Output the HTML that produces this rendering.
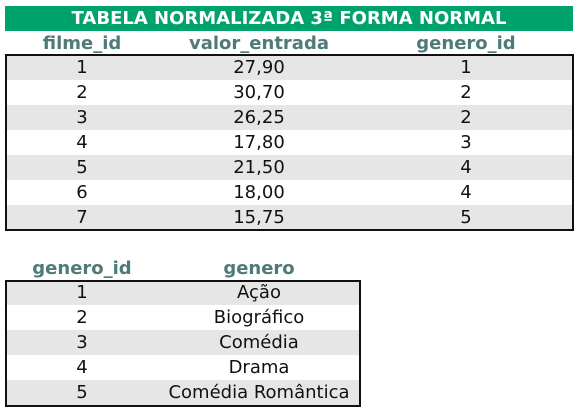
<!DOCTYPE html>
<html><head><meta charset="utf-8"><style>
*{margin:0;padding:0;box-sizing:border-box}
body{width:579px;height:413px;background:#fff;position:relative;font-family:"DejaVu Sans","Liberation Sans",sans-serif;overflow:hidden}
.title{position:absolute;left:5px;top:6px;width:568px;height:25px;background:#00a26b;color:#fff;font-weight:bold;font-size:18px;text-align:center;line-height:25px}
.h{position:absolute;color:#4f7a7a;font-weight:bold;font-size:18px;line-height:25px;text-align:center}
.row{position:absolute;height:25px}
.row.g{background:#e6e6e6}
.c{position:absolute;top:0;line-height:25px;font-size:18px;color:#111;text-align:center}
.frame{position:absolute;border:2px solid #111;z-index:5}
</style></head><body>
<div class="title">TABELA NORMALIZADA 3ª FORMA NORMAL</div>
<div class="h" style="left:2px;width:160px;top:31px">filme_id</div>
<div class="h" style="left:160px;width:198px;top:31px">valor_entrada</div>
<div class="h" style="left:366px;width:200px;top:31px">genero_id</div>

<div style="position:absolute;left:5px;top:55px;width:569px;height:176px">
<div class="row g" style="top:0;left:0;right:0"><div class="c" style="left:-3px;width:160px">1</div><div class="c" style="left:155px;width:198px">27,90</div><div class="c" style="left:361px;width:200px">1</div></div>
<div class="row" style="top:25px;left:0;right:0"><div class="c" style="left:-3px;width:160px">2</div><div class="c" style="left:155px;width:198px">30,70</div><div class="c" style="left:361px;width:200px">2</div></div>
<div class="row g" style="top:50px;left:0;right:0"><div class="c" style="left:-3px;width:160px">3</div><div class="c" style="left:155px;width:198px">26,25</div><div class="c" style="left:361px;width:200px">2</div></div>
<div class="row" style="top:75px;left:0;right:0"><div class="c" style="left:-3px;width:160px">4</div><div class="c" style="left:155px;width:198px">17,80</div><div class="c" style="left:361px;width:200px">3</div></div>
<div class="row g" style="top:100px;left:0;right:0"><div class="c" style="left:-3px;width:160px">5</div><div class="c" style="left:155px;width:198px">21,50</div><div class="c" style="left:361px;width:200px">4</div></div>
<div class="row" style="top:125px;left:0;right:0"><div class="c" style="left:-3px;width:160px">6</div><div class="c" style="left:155px;width:198px">18,00</div><div class="c" style="left:361px;width:200px">4</div></div>
<div class="row g" style="top:150px;left:0;right:0;height:26px"><div class="c" style="left:-3px;width:160px">7</div><div class="c" style="left:155px;width:198px">15,75</div><div class="c" style="left:361px;width:200px">5</div></div>
</div>
<div class="frame" style="left:5px;top:54px;width:569px;height:177px"></div>

<div class="h" style="left:2px;width:160px;top:256px">genero_id</div>
<div class="h" style="left:160px;width:198px;top:256px">genero</div>
<div style="position:absolute;left:5px;top:280px;width:356px;height:126px">
<div class="row g" style="top:0;left:0;right:0"><div class="c" style="left:-3px;width:160px">1</div><div class="c" style="left:155px;width:198px">Ação</div></div>
<div class="row" style="top:25px;left:0;right:0"><div class="c" style="left:-3px;width:160px">2</div><div class="c" style="left:155px;width:198px">Biográfico</div></div>
<div class="row g" style="top:50px;left:0;right:0"><div class="c" style="left:-3px;width:160px">3</div><div class="c" style="left:155px;width:198px">Comédia</div></div>
<div class="row" style="top:75px;left:0;right:0"><div class="c" style="left:-3px;width:160px">4</div><div class="c" style="left:155px;width:198px">Drama</div></div>
<div class="row g" style="top:100px;left:0;right:0"><div class="c" style="left:-3px;width:160px">5</div><div class="c" style="left:155px;width:198px">Comédia Romântica</div></div>
</div>
<div class="frame" style="left:5px;top:280px;width:356px;height:127px"></div>
</body></html>
